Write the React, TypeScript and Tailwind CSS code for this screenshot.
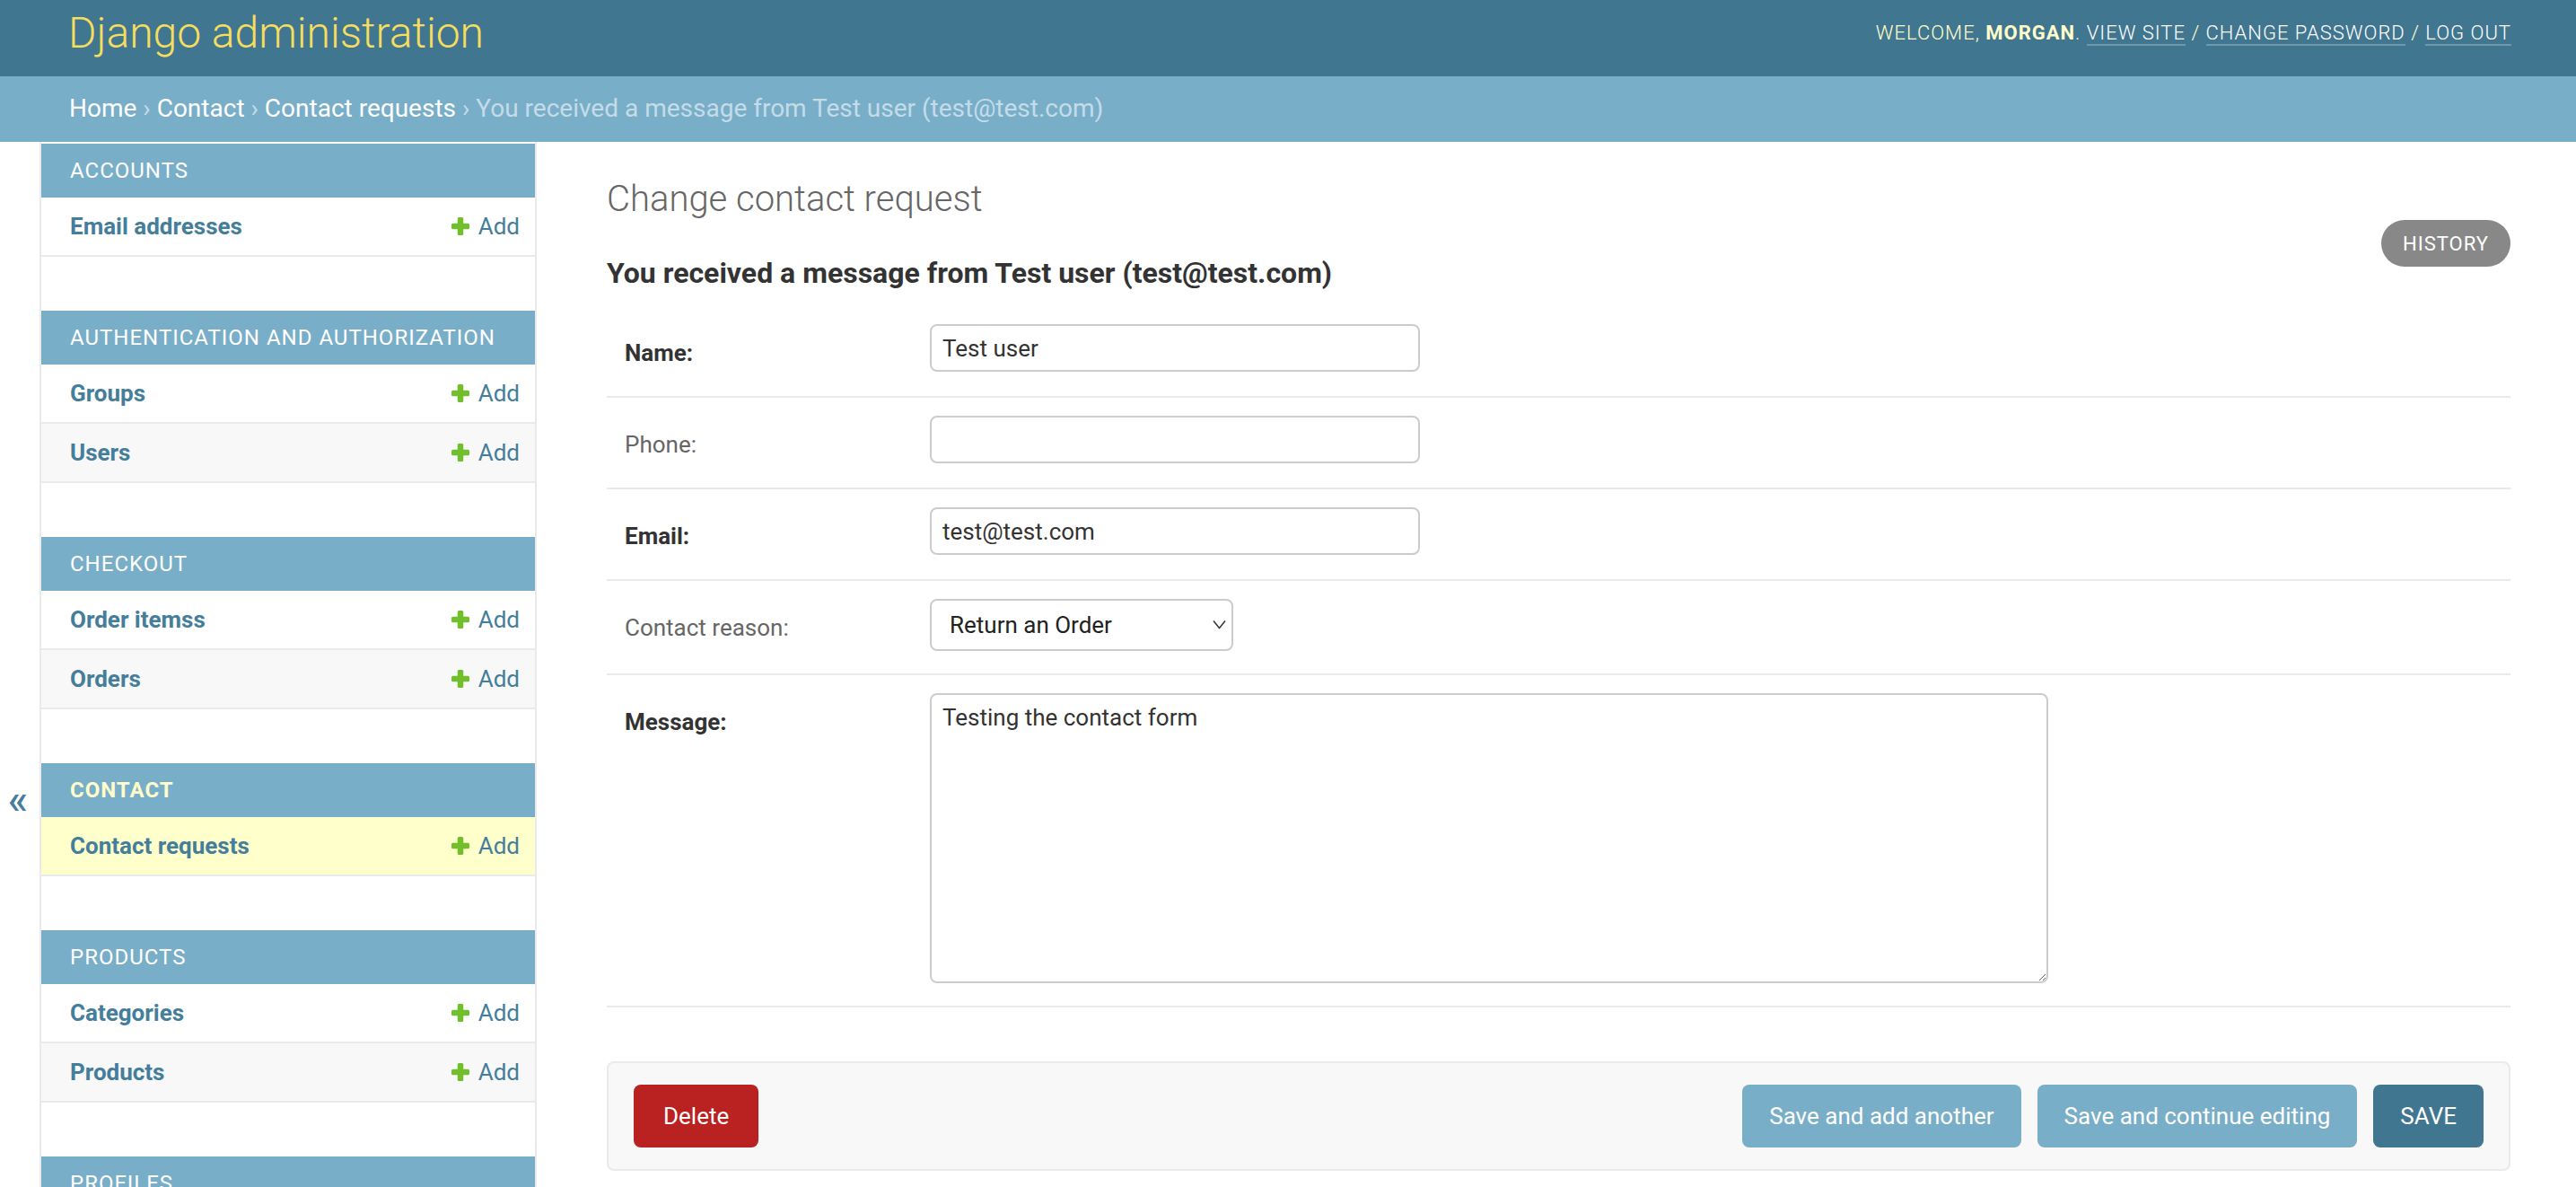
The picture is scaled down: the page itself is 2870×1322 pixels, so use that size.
import React from "react";

function Plus() {
  return (
    <svg width="20" height="20" viewBox="0 0 20 20" className="shrink-0">
      <rect x="6.75" y="0" width="6.5" height="20" rx="1.6" fill="#70bf2b" />
      <rect x="0" y="6.75" width="20" height="6.5" rx="1.6" fill="#70bf2b" />
    </svg>
  );
}

type Mod = { title: string; rows: string[]; current?: boolean };

const modules: Mod[] = [
  { title: "Accounts", rows: ["Email addresses"] },
  { title: "Authentication and Authorization", rows: ["Groups", "Users"] },
  { title: "Checkout", rows: ["Order itemss", "Orders"] },
  { title: "Contact", rows: ["Contact requests"], current: true },
  { title: "Products", rows: ["Categories", "Products"] },
  { title: "Profiles", rows: ["Profiles"] },
];

function Module({ m }: { m: Mod }) {
  return (
    <div className="mb-[60px]">
      <div
        className={
          "h-[60px] bg-[#79aec8] flex items-center pl-[32px] text-[24px] tracking-[1px] uppercase " +
          (m.current ? "text-[#ffc] font-bold" : "text-white font-normal")
        }
      >
        {m.title}
      </div>
      {m.rows.map((r, i) => (
        <div
          key={r}
          className={
            "h-[66px] border-b-2 border-[#eaeaea] flex items-center justify-between pl-[32px] pr-[17px] " +
            (m.current ? "bg-[#ffc]" : i % 2 === 1 ? "bg-[#f8f8f8]" : "bg-white")
          }
        >
          <span className="text-[26px] font-bold text-[#447e9b]">{r}</span>
          <span className="flex items-center gap-[10px] text-[26px] text-[#447e9b]">
            <Plus />
            Add
          </span>
        </div>
      ))}
    </div>
  );
}

function Label({ text, required }: { text: string; required?: boolean }) {
  return (
    <div
      className={
        "w-[340px] shrink-0 pt-[19px] text-[26px] leading-[26px] " +
        (required ? "font-bold text-[#333]" : "font-normal text-[#666]")
      }
    >
      {text}
    </div>
  );
}

function TextRow({ label, required, value }: { label: string; required?: boolean; value: string }) {
  return (
    <div className="flex border-b-2 border-[#eaeaea] pl-[20px] pt-[20px] pb-[27px]">
      <Label text={label} required={required} />
      <input
        defaultValue={value}
        className="block w-[546px] h-[53px] border-2 border-[#ccc] rounded-[8px] px-[12px] text-[26px] text-[#333] bg-white outline-none"
      />
    </div>
  );
}

export default function App() {
  return (
    <div className="h-[1322px] w-[2870px] overflow-hidden bg-white font-['Roboto','Liberation_Sans',sans-serif] leading-[normal] text-[#333]">
      <header className="h-[85px] bg-[#417690] flex justify-between items-start pl-[76px] pr-[72px]">
        <div className="mt-[9px] text-[48px] font-light leading-[56px] text-[#f5dd5d]">
          Django administration
        </div>
        <div className="mt-[24px] text-[22px] font-light uppercase tracking-[1px] text-[#ffc] whitespace-nowrap">
          Welcome, <strong className="font-bold">Morgan</strong>.{" "}
          <a className="text-white border-b-2 border-white/25">View site</a> /{" "}
          <a className="text-white border-b-2 border-white/25">Change password</a> /{" "}
          <a className="text-white border-b-2 border-white/25">Log out</a>
        </div>
      </header>

      <div className="h-[73px] bg-[#79aec8] pl-[77px] pt-[19px] text-[28px] text-[#c4dce8] whitespace-nowrap">
        <a className="text-white">Home</a> › <a className="text-white">Contact</a> ›{" "}
        <a className="text-white">Contact requests</a> › You received a message from Test user (test@test.com)
      </div>

      <div className="flex h-[1164px]">
        <div className="w-[46px] shrink-0 border-r-2 border-[#eaeaea] flex justify-center pr-[4px]">
          <span className="mt-[705px] h-[54px] text-[46px] font-medium text-[#447e9b]">«</span>
        </div>

        <div className="w-[552px] shrink-0 border-r-2 border-[#eaeaea] pt-[2px] overflow-hidden">
          {modules.map((m) => (
            <Module key={m.title} m={m} />
          ))}
        </div>

        <div className="flex-1 pl-[78px] pr-[73px] pt-[40px]">
          <h1 className="text-[40px] font-light text-[#666] mb-[40px]">Change contact request</h1>
          <div className="flex justify-between items-start">
            <h2 className="text-[32px] font-bold text-[#333] mb-[18px]">
              You received a message from Test user (test@test.com)
            </h2>
            <a className="-mt-[40px] h-[52px] px-[24px] rounded-full bg-[#888] text-white text-[22px] tracking-[1px] uppercase flex items-center">
              History
            </a>
          </div>

          <TextRow label="Name:" required value="Test user" />
          <TextRow label="Phone:" value="" />
          <TextRow label="Email:" required value="test@test.com" />

          <div className="flex border-b-2 border-[#eaeaea] pl-[20px] pt-[20px] pb-[25px]">
            <Label text="Contact reason:" />
            <div className="relative w-[338px] h-[58px]">
              <select
                defaultValue="return"
                className="appearance-none block w-[338px] h-[58px] border-2 border-[#ccc] rounded-[8px] pl-[20px] pr-[40px] text-[26px] text-[#222] bg-white outline-none"
              >
                <option value="return">Return an Order</option>
              </select>
              <svg
                className="absolute right-[8px] top-[23px] pointer-events-none"
                width="15"
                height="11"
                viewBox="0 0 15 11"
              >
                <polyline points="1,1.5 7.5,9.5 14,1.5" fill="none" stroke="#3a3a3a" strokeWidth="1.6" />
              </svg>
            </div>
          </div>

          <div className="flex border-b-2 border-[#eaeaea] pl-[20px] pt-[20px] pb-[25px]">
            <Label text="Message:" required />
            <textarea
              defaultValue="Testing the contact form"
              className="block w-[1246px] h-[323px] border-2 border-[#ccc] rounded-[8px] px-[12px] py-[10px] text-[26px] text-[#333] bg-white outline-none leading-[normal]"
            />
          </div>

          <div className="mt-[60px] bg-[#f8f8f8] border-2 border-[#eaeaea] rounded-[8px] px-[28px] py-[24px] flex justify-between items-center">
            <a className="h-[70px] px-[33px] bg-[#ba2121] rounded-[8px] text-white text-[26px] flex items-center">
              Delete
            </a>
            <div className="flex gap-[18px]">
              <button className="h-[70px] px-[30px] bg-[#79aec8] rounded-[8px] text-white text-[26px] flex items-center">
                Save and add another
              </button>
              <button className="h-[70px] px-[30px] bg-[#79aec8] rounded-[8px] text-white text-[26px] flex items-center">
                Save and continue editing
              </button>
              <button className="h-[70px] px-[30px] bg-[#417690] rounded-[8px] text-white text-[26px] uppercase flex items-center">
                Save
              </button>
            </div>
          </div>
        </div>
      </div>
    </div>
  );
}
